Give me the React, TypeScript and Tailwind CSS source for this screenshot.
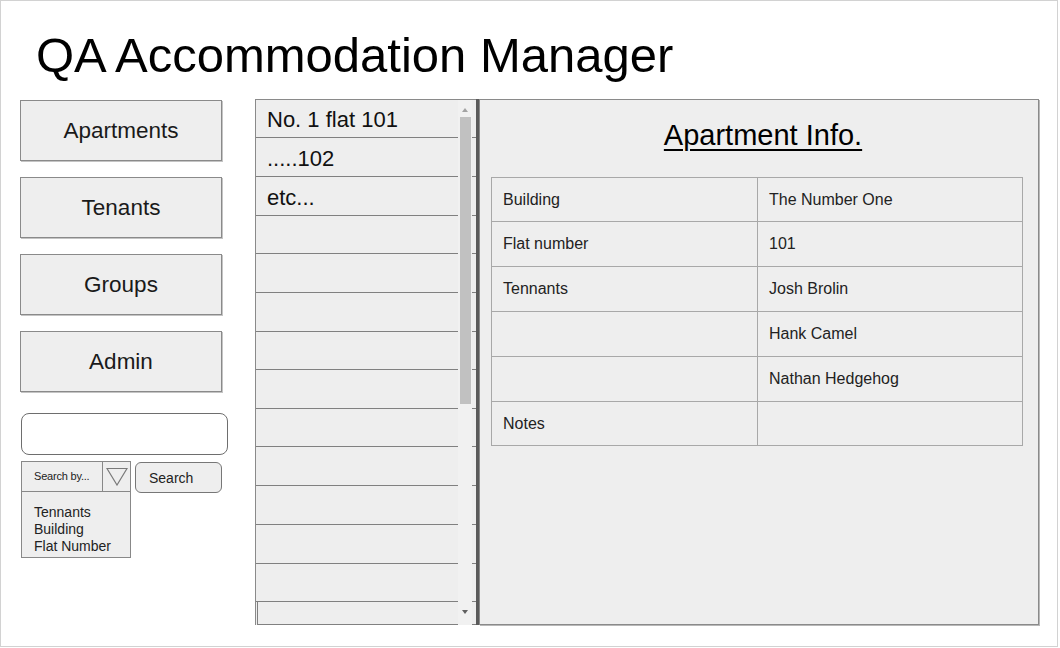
import React from "react";

const navItems = ["Apartments", "Tenants", "Groups", "Admin"];

const listRows: { text: string; h: string }[] = [
  { text: "No. 1 flat 101", h: "h-[38px]" },
  { text: ".....102", h: "h-[39px]" },
  { text: "etc...", h: "h-[39px]" },
  { text: "", h: "h-[38px]" },
  { text: "", h: "h-[39px]" },
  { text: "", h: "h-[39px]" },
  { text: "", h: "h-[38px]" },
  { text: "", h: "h-[39px]" },
  { text: "", h: "h-[38px]" },
  { text: "", h: "h-[39px]" },
  { text: "", h: "h-[39px]" },
  { text: "", h: "h-[39px]" },
  { text: "", h: "h-[38px]" },
];

const tableRows: { label: string; value: string; h: string }[] = [
  { label: "Building", value: "The Number One", h: "h-[44px]" },
  { label: "Flat number", value: "101", h: "h-[45px]" },
  { label: "Tennants", value: "Josh Brolin", h: "h-[45px]" },
  { label: "", value: "Hank Camel", h: "h-[45px]" },
  { label: "", value: "Nathan Hedgehog", h: "h-[45px]" },
  { label: "Notes", value: "", h: "h-[44px]" },
];

export default function App() {
  return (
    <div className="w-[1058px] h-[647px] border border-[#d2d2d2] bg-white [font-family:'Liberation_Sans',Arial,sans-serif] text-[#111]">
      {/* Title */}
      <div className="pt-[26px] pl-[35px] mb-[15px]">
        <h1 className="text-[49px] leading-[57px] font-normal text-black">
          QA Accommodation Manager
        </h1>
      </div>

      {/* Main row */}
      <div className="flex pl-[19px] h-[526px]">
        {/* Left column */}
        <div className="w-[208px] flex flex-col pt-[1px]">
          <div className="flex flex-col gap-[16px]">
            {navItems.map((n) => (
              <div
                key={n}
                className="w-[202px] h-[61px] border border-[#8a8a8a] bg-[#eeeeee] shadow-[1px_1px_0_#c4c4c4] flex items-center justify-center pt-[1px] text-[22.5px] text-[#1a1a1a]"
              >
                {n}
              </div>
            ))}
          </div>

          <div className="mt-[21px] ml-[1px] w-[207px] h-[42px] border-[1.5px] border-[#6e6e6e] rounded-[8px] bg-white" />

          <div className="mt-[6px] ml-[1px] flex items-start gap-[4px]">
            {/* Select */}
            <div className="w-[110px] flex flex-col">
              <div className="h-[31px] flex border border-[#888] bg-[#eeeeee]">
                <div className="flex-1 flex items-center pl-[12px] text-[11px] text-[#222] tracking-[-0.2px]">
                  Search by...
                </div>
                <div className="w-[28px] border-l border-[#888] flex items-center justify-center">
                  <svg width="22" height="19" viewBox="0 0 22 19">
                    <polygon
                      points="1,1.5 21,1.5 11,18"
                      fill="none"
                      stroke="#7a7a7a"
                      strokeWidth="1.2"
                    />
                  </svg>
                </div>
              </div>
              <div className="h-[66px] border border-t-0 border-[#888] bg-[#eeeeee] pl-[12px] pt-[12px] text-[14px] leading-[17px] text-[#222]">
                <div>Tennants</div>
                <div>Building</div>
                <div>Flat Number</div>
              </div>
            </div>
            {/* Search button */}
            <div className="mt-[1px] w-[87px] h-[31px] border border-[#777] rounded-[6px] bg-[#eeeeee] flex items-center pl-[13px] pt-[1px] text-[14px] text-[#222]">
              Search
            </div>
          </div>
        </div>

        {/* List panel */}
        <div className="ml-[27px] w-[221px] h-[526px] relative border-l border-t border-[#8a8a8a] bg-[#eeeeee] flex flex-col">
          {listRows.map((r, i) => (
            <div
              key={i}
              className={`${r.h} shrink-0 border-b border-[#808080] flex items-center pl-[11px] pt-[2px] text-[22px] text-[#111]`}
            >
              {r.text}
            </div>
          ))}
          <div className="ml-[1px] flex-1 border-l border-b border-[#808080]" />

          {/* Scrollbar */}
          <div className="absolute left-[202px] top-0 w-[14px] h-[525px] bg-[#f1f1f1]">
            <div className="absolute left-[4px] top-[8px] w-0 h-0 border-l-[3px] border-r-[3px] border-b-[4px] border-l-transparent border-r-transparent border-b-[#a3a3a3]" />
            <div className="absolute left-[2px] top-[17px] w-[11px] h-[287px] bg-[#c1c1c1]" />
            <div className="absolute left-[4px] top-[510px] w-0 h-0 border-l-[3px] border-r-[3px] border-t-[4px] border-l-transparent border-r-transparent border-t-[#606060]" />
          </div>
        </div>

        {/* Divider */}
        <div className="w-[3px] h-[526px] bg-[#5a5a5a]" />

        {/* Detail panel */}
        <div className="w-[560px] h-[526px] border border-[#8a8a8a] bg-[#eeeeee] shadow-[1px_1px_0_#b8b8b8]">
          <div className="pt-[18px] pl-[8px] text-center">
            <span className="text-[29px] leading-[34px] underline decoration-[2px] underline-offset-[4px] text-black">
              Apartment Info.
            </span>
          </div>
          <div className="mt-[25px] ml-[11px] w-[532px] border-t border-l border-[#a8a8a8]">
            {tableRows.map((r, i) => (
              <div key={i} className={`${r.h} flex`}>
                <div className="w-[266px] border-r border-b border-[#a8a8a8] flex items-center pl-[11px] text-[16px] text-[#222]">
                  {r.label}
                </div>
                <div className="w-[265px] border-r border-b border-[#a8a8a8] flex items-center pl-[11px] text-[16px] text-[#222]">
                  {r.value}
                </div>
              </div>
            ))}
          </div>
        </div>
      </div>
    </div>
  );
}
